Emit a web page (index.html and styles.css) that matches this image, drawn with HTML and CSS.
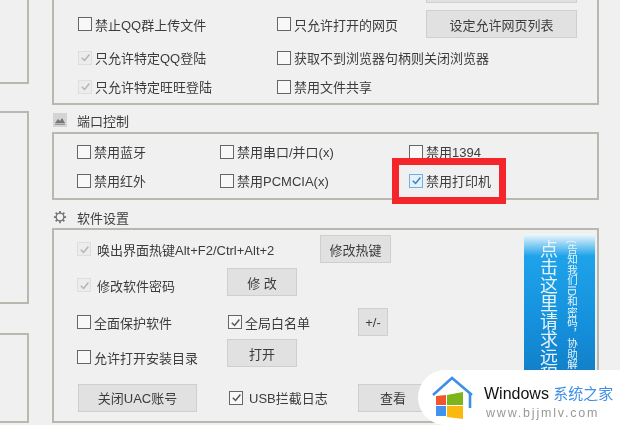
FILE: index.html
```html
<!DOCTYPE html>
<html lang="zh-CN">
<head>
    <meta charset="UTF-8">
    <meta name="viewport" content="width=device-width, initial-scale=1.0">
    <title>软件设置</title>
    <link rel="stylesheet" href="styles.css">
</head>
<body>
    <svg class="defs" width="0" height="0">
        <symbol id="tick" viewBox="0 0 14 14"><path d="M3 7.2l3 3 5.2-6.4" fill="none" stroke="currentColor" stroke-width="1.6"/></symbol>
    </svg>
    <div class="app">
        <div class="side">
            <div class="side-panel side-top"></div>
            <div class="side-panel side-mid"></div>
            <div class="side-panel side-low"></div>
        </div>
        <div class="main">
            <div class="group group-top">
                <div class="row row-a">
                    <label class="cell w199"><span class="box"></span>禁止QQ群上传文件</label>
                    <label class="cell w149"><span class="box"></span>只允许打开的网页</label>
                    <button class="btn btn-list">设定允许网页列表</button>
                </div>
                <div class="row row-b">
                    <label class="cell w199 off"><span class="box"><svg><use href="#tick"/></svg></span>只允许特定QQ登陆</label>
                    <label class="cell"><span class="box"></span>获取不到浏览器句柄则关闭浏览器</label>
                </div>
                <div class="row row-c">
                    <label class="cell w199 off"><span class="box"><svg><use href="#tick"/></svg></span>只允许特定旺旺登陆</label>
                    <label class="cell"><span class="box"></span>禁用文件共享</label>
                </div>
            </div>

            <div class="title title-port">
                <svg class="ico" viewBox="0 0 14 14"><rect width="14" height="14" fill="#d4d4d4"/><path d="M2 10l3-4 2 2 2-3 3 5z" fill="#777"/><rect x="2" y="10.5" width="10" height="1.5" fill="#999"/></svg>
                <span>端口控制</span>
            </div>
            <div class="group group-port">
                <div class="row row-p">
                    <label class="cell w143"><span class="box"></span>禁用蓝牙</label>
                    <label class="cell w189"><span class="box"></span>禁用串口/并口(x)</label>
                    <label class="cell"><span class="box"></span>禁用1394</label>
                </div>
                <div class="row row-p">
                    <label class="cell w143"><span class="box"></span>禁用红外</label>
                    <label class="cell w189"><span class="box"></span>禁用PCMCIA(x)</label>
                    <label class="cell"><span class="box box-on"><svg><use href="#tick"/></svg></span>禁用打印机</label>
                </div>
                <div class="mark"></div>
            </div>

            <div class="title title-soft">
                <svg class="ico" viewBox="0 0 16 16"><circle cx="8" cy="8" r="4.4" fill="none" stroke="#777" stroke-width="1.6"/><path d="M8 1v3M8 12v3M1 8h3M12 8h3M3 3l2 2M11 11l2 2M13 3l-2 2M5 11l-2 2" stroke="#777" stroke-width="2"/></svg>
                <span>软件设置</span>
            </div>
            <div class="group group-soft">
                <div class="rows">
                    <div class="row r1">
                        <label class="cell w243 off wide"><span class="box"><svg><use href="#tick"/></svg></span>唤出界面热键Alt+F2/Ctrl+Alt+2</label>
                        <button class="btn btn-hot">修改热键</button>
                    </div>
                    <div class="row r2">
                        <label class="cell w150 off wide"><span class="box"><svg><use href="#tick"/></svg></span>修改软件密码</label>
                        <button class="btn btn-std up6">修 改</button>
                    </div>
                    <div class="row r3">
                        <label class="cell w151"><span class="box"></span>全面保护软件</label>
                        <label class="cell w130"><span class="box"><svg><use href="#tick"/></svg></span>全局白名单</label>
                        <button class="btn btn-small">+/-</button>
                    </div>
                    <div class="row r4">
                        <label class="cell w150"><span class="box"></span>允许打开安装目录</label>
                        <button class="btn btn-std up8">打开</button>
                    </div>
                    <div class="row r5">
                        <button class="btn btn-uac">关闭UAC账号</button>
                        <label class="cell w130 wide usb"><span class="box"><svg><use href="#tick"/></svg></span>USB拦截日志</label>
                        <button class="btn btn-std">查看</button>
                    </div>
                </div>
                <div class="banner">
                    <span class="banner-big">点击这里请求远程</span>
                    <span class="banner-small">(告知我们ID和密码，协助解决)</span>
                </div>
            </div>
        </div>
    </div>

    <div class="badge">
        <svg class="badge-logo" viewBox="0 0 48 50">
            <path d="M3 20L22 3l20 17M40 19v14" fill="none" stroke="#3d8fe6" stroke-width="2.6"/>
            <path d="M6 21l10-1v10H6z" fill="#f0552d"/>
            <path d="M17 20l16-3v13H17z" fill="#7cb518"/>
            <path d="M6 31h10v10H6z" fill="#3f93ee"/>
            <path d="M17 31h16v13l-16-2z" fill="#fbb80f"/>
        </svg>
        <div class="badge-text">
            <div class="badge-name">Windows <span>系统之家</span></div>
            <div class="badge-url">www.bjjmlv.com</div>
        </div>
    </div>
</body>
</html>
```

FILE: styles.css
```css
html, body {
    margin: 0;
    padding: 0;
}
body {
    width: 620px;
    height: 425px;
    overflow: hidden;
    position: relative;
    background: #f0f0f0;
    font-family: "Liberation Sans", "Noto Sans CJK SC", sans-serif;
    font-size: 13px;
    color: #3c3c3c;
}
.defs {
    position: absolute;
}
.app {
    display: flex;
    filter: blur(0.7px);
}
.side {
    width: 29px;
    flex: none;
}
.side-panel {
    border: 2px solid #b8b8ae;
    border-left: 0;
    box-sizing: border-box;
}
.side-top {
    height: 84px;
    border-top: 0;
}
.side-mid {
    height: 193px;
    margin-top: 27px;
}
.side-low {
    height: 90px;
    margin-top: 29px;
}
.main {
    width: 547px;
    margin-left: 23px;
    flex: none;
}
.group {
    border: 2px solid #b8b8ae;
    box-sizing: border-box;
    position: relative;
}
.group-top {
    height: 105px;
    border-top: 0;
    padding-left: 24px;
}
.group-top::before {
    content: "";
    position: absolute;
    left: 372px;
    top: -24px;
    width: 151px;
    height: 27px;
    background: #e1e1e1;
    border: 1px solid #d0d0d0;
    box-sizing: border-box;
}
.group-port {
    height: 68px;
    padding: 3px 0 0 23px;
}
.group-soft {
    height: 195px;
    padding-left: 23px;
    display: flex;
}
.title {
    display: flex;
    align-items: center;
    gap: 10px;
    padding-left: 1px;
    box-sizing: border-box;
}
.title-port {
    height: 27px;
    padding-top: 3px;
}
.title-soft {
    height: 28px;
    padding-top: 6px;
}
.ico {
    width: 14px;
    height: 14px;
    flex: none;
}
.row {
    display: flex;
    align-items: center;
}
.row-a {
    height: 48px;
}
.row-b {
    height: 21px;
    margin-top: -1px;
}
.row-c {
    height: 37px;
}
.row-p {
    height: 29px;
}
.r1 { height: 38px; }
.r2 { height: 34px; }
.r3 { height: 40px; }
.r4 { height: 30px; }
.r5 { height: 44px; padding-top: 7px; box-sizing: border-box; }
.rows {
    width: 447px;
    flex: none;
}
.cell {
    display: flex;
    align-items: center;
    white-space: nowrap;
    flex: none;
}
.w130 { width: 130px; }
.w143 { width: 143px; }
.w149 { width: 149px; }
.w150 { width: 150px; }
.w151 { width: 151px; }
.w189 { width: 189px; }
.w199 { width: 199px; }
.w243 { width: 243px; }
.box {
    width: 14px;
    height: 14px;
    box-sizing: border-box;
    border: 1.5px solid #666;
    background: #f8f8f8;
    color: #555;
    margin-right: 3px;
    flex: none;
    display: flex;
    align-items: center;
    justify-content: center;
}
.box svg {
    width: 13px;
    height: 13px;
    flex: none;
}
.off .box {
    border: 1px solid #dedede;
    background: #ececec;
    color: #b4b4b4;
}
.box-on {
    border-color: #6db2e6;
    color: #2f83c8;
    background: #e6f1fa;
}
.wide .box {
    margin-right: 6px;
}
.usb {
    padding-left: 1px;
    width: 129px;
}
.btn {
    height: 28px;
    box-sizing: border-box;
    background: #e1e1e1;
    border: 1.5px solid #cfcfcf;
    font: inherit;
    color: #3c3c3c;
    padding: 0;
    flex: none;
}
.btn-list {
    width: 151px;
}
.btn-hot {
    width: 71px;
}
.btn-std {
    width: 70px;
}
.btn-small {
    width: 30px;
}
.btn-uac {
    width: 119px;
    margin: 0 31px 0 1px;
}
.up6 {
    margin-bottom: 6px;
}
.up8 {
    margin-bottom: 8px;
}
.mark {
    position: absolute;
    left: 338px;
    top: 24px;
    width: 114px;
    height: 46px;
    box-sizing: border-box;
    border: 7px solid #f5262b;
}
.banner {
    width: 71px;
    height: 180px;
    margin-top: 4px;
    background: linear-gradient(#f0f8fc 0, #1ea3ea 22px, #1590dc 90px, #0f72b8 100%);
    color: #e8f4fb;
    display: flex;
    gap: 8px;
    overflow: hidden;
    box-sizing: border-box;
    padding: 6px 0 0 13px;
}
.banner-big,
.banner-small {
    writing-mode: vertical-rl;
    white-space: nowrap;
}
.banner-big {
    font-size: 18px;
    line-height: 20px;
}
.banner-small {
    font-size: 10.5px;
    line-height: 13px;
}
.badge {
    position: absolute;
    right: 0;
    top: 370px;
    width: 202px;
    height: 55px;
    background: #fff;
    border-radius: 28px 0 0 28px;
    display: flex;
}
.badge-logo {
    width: 48px;
    height: 50px;
    margin: 5px 0 0 12px;
    flex: none;
}
.badge-text {
    margin-left: 6px;
    padding-top: 13px;
    white-space: nowrap;
}
.badge-name {
    font-size: 16px;
    line-height: 20px;
    color: #111;
}
.badge-name span {
    font-family: "Noto Sans CJK SC", sans-serif;
    font-size: 15px;
    color: #3f8fe6;
}
.badge-url {
    font-size: 12.5px;
    line-height: 16px;
    letter-spacing: 1.8px;
    color: #999;
    margin: 1px 0 0 2px;
}
```
